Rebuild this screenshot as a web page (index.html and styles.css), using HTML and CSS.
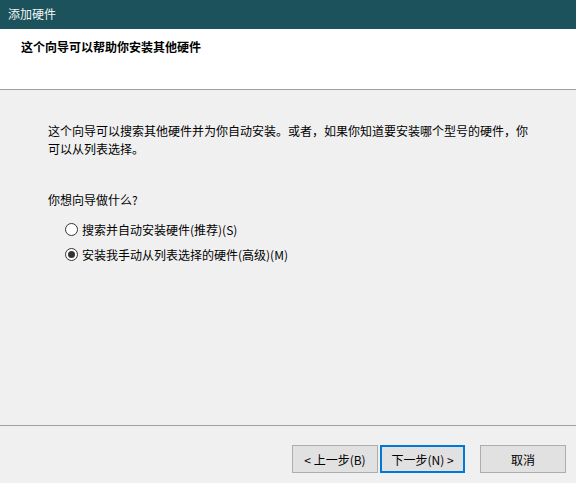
FILE: index.html
```html
<!DOCTYPE html>
<html lang="zh-CN">
<head>
    <meta charset="UTF-8">
    <title>添加硬件</title>
    <link rel="stylesheet" href="styles.css">
</head>
<body>
    <div class="window">
        <div class="titlebar">添加硬件</div>
        <div class="header">
            <h1>这个向导可以帮助你安装其他硬件</h1>
        </div>
        <div class="content">
            <p class="intro">这个向导可以搜索其他硬件并为你自动安装。或者，如果你知道要安装哪个型号的硬件，你可以从列表选择。</p>
            <p class="question">你想向导做什么?</p>
            <label class="radio">
                <span class="dot"></span>
                <span>搜索并自动安装硬件(推荐)(S)</span>
            </label>
            <label class="radio checked">
                <span class="dot"></span>
                <span>安装我手动从列表选择的硬件(高级)(M)</span>
            </label>
        </div>
        <div class="footer">
            <button class="btn">&lt; 上一步(B)</button>
            <button class="btn default">下一步(N) &gt;</button>
            <button class="btn cancel">取消</button>
        </div>
    </div>
</body>
</html>
```

FILE: styles.css
```css
html, body {
    margin: 0;
    padding: 0;
}
body {
    font-family: "Noto Sans CJK SC", "Noto Sans", sans-serif;
    font-size: 12px;
    color: #000;
    background-color: #f0f0f0;
}
.window {
    display: flex;
    flex-direction: column;
    width: 576px;
    height: 483px;
}
.titlebar {
    height: 29px;
    line-height: 28px;
    padding-left: 8px;
    background-color: #1b525c;
    color: #f2f6f6;
    font-size: 12px;
}
.header {
    height: 60px;
    background-color: #fff;
    border-bottom: 1px solid #a0a0a0;
}
h1 {
    margin: 0;
    padding: 10px 0 0 21px;
    font-size: 12px;
    line-height: 16px;
    font-weight: bold;
}
.content {
    flex: 1;
    padding: 32px 40px 0 48px;
}
.intro {
    margin: 0;
    line-height: 18px;
}
.question {
    margin: 33px 0 8px;
    line-height: 18px;
}
.radio {
    display: flex;
    align-items: center;
    gap: 4px;
    height: 25px;
    margin-left: 17px;
}
.dot {
    box-sizing: border-box;
    width: 13px;
    height: 13px;
    border: 1px solid #333;
    border-radius: 50%;
    background-color: #fff;
    display: flex;
    align-items: center;
    justify-content: center;
}
.checked .dot::after {
    content: "";
    width: 7px;
    height: 7px;
    border-radius: 50%;
    background-color: #333;
}
.footer {
    height: 58px;
    border-top: 1px solid #a0a0a0;
    display: flex;
    justify-content: flex-end;
    padding: 19px 10px 0 0;
    box-sizing: border-box;
}
.btn {
    box-sizing: border-box;
    width: 86px;
    height: 28px;
    margin-left: 2px;
    font-family: inherit;
    font-size: 12px;
    color: #000;
    background-color: #e1e1e1;
    border: 1px solid #adadad;
    padding: 0;
}
.btn.default {
    border: 2px solid #0078d7;
    width: 85px;
}
.btn.cancel {
    margin-left: 15px;
}
```
